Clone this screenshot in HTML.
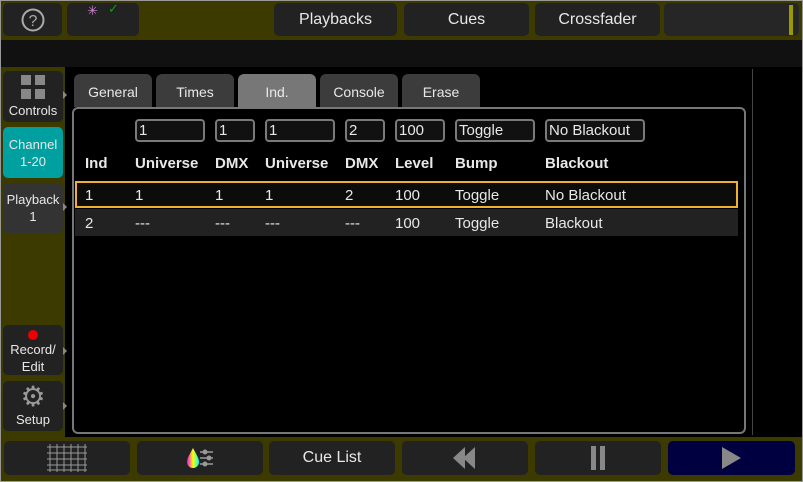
<!DOCTYPE html>
<html><head><style>
*{margin:0;padding:0;box-sizing:border-box}
body{width:803px;height:482px;background:#3d3a00;position:relative;overflow:hidden;font-family:"Liberation Sans",sans-serif;color:#e8e8e8}
.a{position:absolute}
.btn{position:absolute;background:#222;border-radius:5px;display:flex;align-items:center;justify-content:center;text-align:center;font-size:16px;color:#e8e8e8}
.sb{font-size:13px;line-height:17px;flex-direction:column}
.tab{position:absolute;top:74px;height:33px;width:78px;background:#3c3c3c;border-radius:6px 6px 0 0;font-size:14px;display:flex;align-items:center;justify-content:center;padding-top:2px}
.inp{position:absolute;top:119px;height:23px;border:2px solid #7a7a7a;border-radius:4px;background:#111;font-size:15px;padding-left:2px;line-height:19px}
.t{position:absolute;font-size:15px}
.h{position:absolute;font-size:15px;font-weight:bold;top:155px}
.arr{position:absolute;left:63px;width:0;height:0;border-top:4px solid transparent;border-bottom:4px solid transparent;border-left:4px solid #888}
</style></head><body>
<div class="a" style="left:0;top:0;width:803px;height:482px;border:1px solid #999;z-index:9;pointer-events:none"></div>
<div class="btn" style="left:3px;top:3px;width:59px;height:33px"><svg width="24" height="24" viewBox="0 0 24 24"><circle cx="12" cy="12" r="10.5" fill="none" stroke="#aaa" stroke-width="2"/><text x="12" y="18" font-size="16" text-anchor="middle" fill="#aaa" font-family="Liberation Sans">?</text></svg></div>
<div class="btn" style="left:67px;top:3px;width:72px;height:33px;align-items:flex-start"><span style="font-size:13px;color:#c8c;margin-top:0px">✳</span><span style="font-size:13px;color:#0a0;margin-left:10px;margin-top:-2px">✓</span></div>
<div class="btn" style="left:274px;top:3px;width:123px;height:33px">Playbacks</div>
<div class="btn" style="left:404px;top:3px;width:125px;height:33px">Cues</div>
<div class="btn" style="left:535px;top:3px;width:125px;height:33px">Crossfader</div>
<div class="btn" style="left:664px;top:3px;width:135px;height:33px;background:#262626"></div>
<div class="a" style="left:789px;top:5px;width:4px;height:30px;background:#9a9a00"></div>
<div class="a" style="left:1px;top:40px;width:801px;height:27px;background:#111"></div>
<div class="a" style="left:65px;top:67px;width:737px;height:370px;background:#000"></div>
<div class="a" style="left:752px;top:69px;width:1px;height:366px;background:#444"></div>
<div class="btn sb" style="left:3px;top:71px;width:60px;height:51px;justify-content:flex-end;padding-bottom:3px"><svg width="26" height="26" viewBox="0 0 26 26" style="margin-bottom:2px"><rect x="1" y="1" width="10" height="10" fill="#888"/><rect x="15" y="1" width="10" height="10" fill="#888"/><rect x="1" y="15" width="10" height="10" fill="#888"/><rect x="15" y="15" width="10" height="10" fill="#888"/></svg>Controls</div>
<div class="btn sb" style="left:3px;top:127px;width:60px;height:51px;background:#00a0a0">Channel<br>1-20</div>
<div class="btn sb" style="left:3px;top:183px;width:60px;height:50px;background:#333">Playback<br>1</div>
<div class="btn sb" style="left:3px;top:325px;width:60px;height:50px;padding-top:4px"><span style="width:10px;height:10px;border-radius:5px;background:#e00;display:block;margin-bottom:1px"></span>Record/<br>Edit</div>
<div class="btn sb" style="left:3px;top:381px;width:60px;height:50px;justify-content:flex-end;padding-bottom:3px"><span style="font-size:28px;line-height:28px;color:#999">⚙</span>Setup</div>
<div class="arr" style="top:91px"></div><div class="arr" style="top:203px"></div><div class="arr" style="top:347px"></div><div class="arr" style="top:402px"></div>
<div class="tab" style="left:74px">General</div>
<div class="tab" style="left:156px">Times</div>
<div class="tab" style="left:238px;background:#777">Ind.</div>
<div class="tab" style="left:320px">Console</div>
<div class="tab" style="left:402px">Erase</div>
<div class="a" style="left:72px;top:107px;width:674px;height:327px;border:2px solid #777;border-radius:6px"></div>
<div class="inp" style="left:135px;width:70px">1</div>
<div class="inp" style="left:215px;width:40px">1</div>
<div class="inp" style="left:265px;width:70px">1</div>
<div class="inp" style="left:345px;width:40px">2</div>
<div class="inp" style="left:395px;width:50px">100</div>
<div class="inp" style="left:455px;width:80px">Toggle</div>
<div class="inp" style="left:545px;width:100px">No Blackout</div>
<div class="h" style="left:85px">Ind</div><div class="h" style="left:135px">Universe</div><div class="h" style="left:215px">DMX</div><div class="h" style="left:265px">Universe</div><div class="h" style="left:345px">DMX</div><div class="h" style="left:395px">Level</div><div class="h" style="left:455px">Bump</div><div class="h" style="left:545px">Blackout</div>
<div class="a" style="left:75px;top:181px;width:663px;height:27px;border:2px solid #f0b030;background:#0c0c0c"></div>
<div class="a" style="left:75px;top:209px;width:663px;height:27px;background:#222"></div>
<div class="t" style="top:187px;left:85px">1</div><div class="t" style="top:187px;left:135px">1</div><div class="t" style="top:187px;left:215px">1</div><div class="t" style="top:187px;left:265px">1</div><div class="t" style="top:187px;left:345px">2</div><div class="t" style="top:187px;left:395px">100</div><div class="t" style="top:187px;left:455px">Toggle</div><div class="t" style="top:187px;left:545px">No Blackout</div>
<div class="t" style="top:215px;left:85px">2</div><div class="t" style="top:215px;left:135px">---</div><div class="t" style="top:215px;left:215px">---</div><div class="t" style="top:215px;left:265px">---</div><div class="t" style="top:215px;left:345px">---</div><div class="t" style="top:215px;left:395px">100</div><div class="t" style="top:215px;left:455px">Toggle</div><div class="t" style="top:215px;left:545px">Blackout</div>
<div class="btn" style="left:4px;top:441px;width:126px;height:34px"><svg width="46" height="30" viewBox="0 0 46 30"><g stroke="#999" stroke-width="1"><path d="M3 4H43M3 10H43M3 16H43M3 22H43M3 27H43M6 1V29M13 1V29M20 1V29M27 1V29M34 1V29M41 1V29"/></g></svg></div>
<div class="btn" style="left:137px;top:441px;width:126px;height:34px"><svg width="30" height="24" viewBox="0 0 30 24"><defs><linearGradient id="g" x1="0" x2="1"><stop offset="0" stop-color="#f0f"/><stop offset=".5" stop-color="#ff0"/><stop offset="1" stop-color="#0ff"/></linearGradient></defs><path d="M8 2C5 8 2 12 2 16a6 6 0 0 0 12 0c0-4-3-8-6-14z" fill="url(#g)"/><g stroke="#999" stroke-width="1.5"><path d="M15 6H28M15 12H28M15 18H28"/></g><circle cx="20" cy="6" r="2.5" fill="#999"/><circle cx="24" cy="12" r="2.5" fill="#999"/><circle cx="20" cy="18" r="2.5" fill="#999"/></svg></div>
<div class="btn" style="left:269px;top:441px;width:126px;height:34px">Cue List</div>
<div class="btn" style="left:402px;top:441px;width:126px;height:34px"><svg width="24" height="22" viewBox="0 0 24 22"><path d="M0 11L12 0V22Z M10 11L22 0V22Z" fill="#888"/></svg></div>
<div class="btn" style="left:535px;top:441px;width:126px;height:34px"><svg width="16" height="24"><rect x="1" y="0" width="5" height="24" fill="#888"/><rect x="10" y="0" width="5" height="24" fill="#888"/></svg></div>
<div class="btn" style="left:668px;top:441px;width:127px;height:34px;background:#000040"><svg width="20" height="22"><path d="M0 0L19 11L0 22Z" fill="#888"/></svg></div>
</body></html>
